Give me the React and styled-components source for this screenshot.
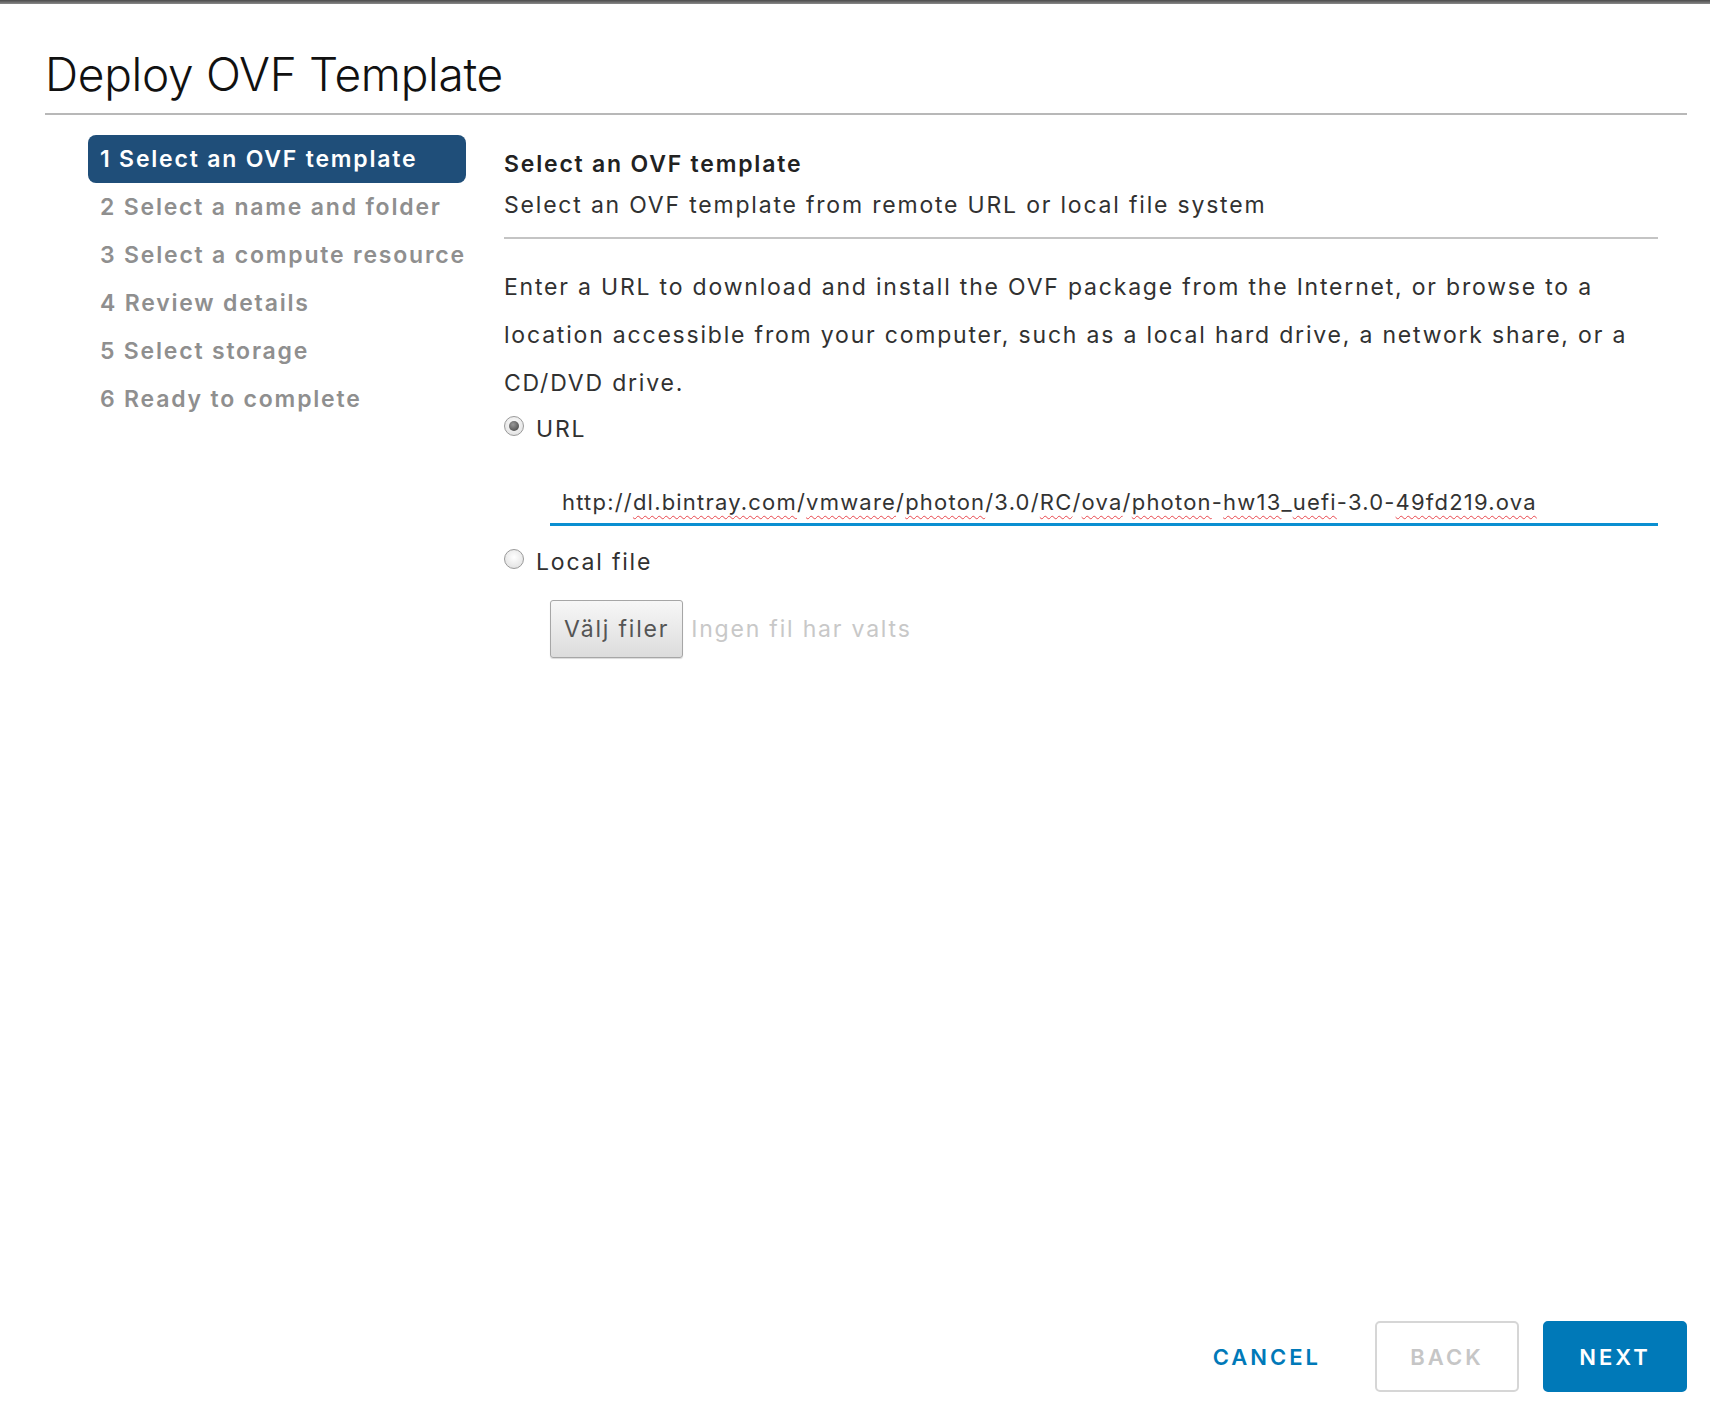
import styled, { createGlobalStyle } from "styled-components"

const GlobalStyle = createGlobalStyle`
  html, body {
    margin: 0;
    padding: 0;
    background: #fff;
  }
  body {
    font-family: Inter, "Open Sans", "Liberation Sans", sans-serif;
    color: #313131;
  }
`

const PageStyled = styled.div`
  min-height: 1422px;
  display: flex;
  flex-direction: column;
  box-sizing: border-box;
`

const TopStripStyled = styled.div`
  height: 4px;
  background: linear-gradient(#4a4a4a, #8a8a8a);
`

const DialogStyled = styled.div`
  flex: 1;
  display: flex;
  flex-direction: column;
  padding: 0 23px 30px 45px;
`

const TitleStyled = styled.h1`
  margin: 0;
  padding: 42px 0 11px;
  font-size: 46px;
  font-weight: 300;
  color: #111;
  letter-spacing: -0.3px;
  border-bottom: 2px solid #b8b8b8;
`

const ColumnsStyled = styled.div`
  display: flex;
  gap: 38px;
  padding-top: 20px;
`

const StepsStyled = styled.ol`
  list-style: none;
  margin: 0 0 0 43px;
  padding: 0;
  width: 378px;
  flex-shrink: 0;
`

const StepStyled = styled.li`
  height: 48px;
  display: flex;
  align-items: center;
  padding-left: 12px;
  box-sizing: border-box;
  font-size: 23px;
  font-weight: 600;
  letter-spacing: 1.8px;
  border-radius: 8px;
  color: ${p => (p.$active ? "#fff" : "#8f8f8f")};
  background: ${p => (p.$active ? "#1f4e79" : "transparent")};
  white-space: nowrap;
`

const ContentStyled = styled.div`
  flex: 1;
  padding-right: 29px;
  font-size: 23px;
  letter-spacing: 1.8px;
  color: #313131;
`

const HeadStyled = styled.div`
  border-bottom: 2px solid #c4c4c4;
  padding: 9px 0 11px;
`

const HeadTitleStyled = styled.h2`
  margin: 0;
  font-size: 23px;
  font-weight: 600;
  line-height: 41px;
  color: #222;
`

const HeadSubStyled = styled.p`
  margin: 0;
  line-height: 41px;
`

const IntroStyled = styled.p`
  margin: 24px 0 0;
  line-height: 48px;
`

const OptionStyled = styled.label`
  display: flex;
  align-items: center;
  gap: 12px;
  height: 44px;
  margin-top: ${p => p.$gap || 0}px;
`

const RadioStyled = styled.span`
  width: 20px;
  height: 20px;
  border-radius: 50%;
  box-sizing: border-box;
  border: 1px solid #9a9a9a;
  background: radial-gradient(circle at 50% 40%, #fff 0%, #e6e6e6 70%, #d0d0d0 100%);
  display: flex;
  align-items: center;
  justify-content: center;
  margin-top: -6px;
  &::after {
    content: "";
    width: 10px;
    height: 10px;
    border-radius: 50%;
    background: ${p => (p.$checked ? "radial-gradient(circle at 40% 35%, #999, #3c3c3c)" : "transparent")};
  }
`

const FieldStyled = styled.div`
  margin: 36px 0 0 46px;
  padding: 0 0 6px 12px;
  border-bottom: 3px solid #0a8fd1;
  color: #333;
  font-size: 22px;
  letter-spacing: 1.2px;
  line-height: 30px;
  white-space: nowrap;
`

const TypoStyled = styled.span`
  text-decoration: underline wavy #e8474e;
  text-decoration-thickness: 1px;
  text-underline-offset: 5px;
`

const FileRowStyled = styled.div`
  display: flex;
  align-items: center;
  gap: 8px;
  margin: 16px 0 0 46px;
`

const FileButtonStyled = styled.button`
  height: 58px;
  padding: 0 13px;
  font-family: inherit;
  font-size: 23px;
  letter-spacing: 1.8px;
  color: #555;
  border: 1px solid #a6a6a6;
  border-radius: 3px;
  background: linear-gradient(#f7f7f7, #dcdcdc);
  box-shadow: 0 1px 1px rgba(0, 0, 0, 0.15);
`

const NoFileStyled = styled.span`
  color: #c8c8c8;
`

const FooterStyled = styled.div`
  margin-top: auto;
  display: flex;
  justify-content: flex-end;
  gap: 24px;
`

const ButtonStyled = styled.button`
  height: 71px;
  min-width: 144px;
  padding: 0 28px;
  box-sizing: border-box;
  font-family: inherit;
  font-size: 22px;
  font-weight: 600;
  letter-spacing: 3px;
  border-radius: 5px;
  border: 2px solid ${p => (p.$variant === "primary" ? "#0079b8" : p.$variant === "outline" ? "#d6d6d6" : "transparent")};
  background: ${p => (p.$variant === "primary" ? "#0079b8" : "transparent")};
  color: ${p => (p.$variant === "primary" ? "#fff" : p.$variant === "outline" ? "#c6c6c6" : "#0079b8")};
`

const steps = [
  "1 Select an OVF template",
  "2 Select a name and folder",
  "3 Select a compute resource",
  "4 Review details",
  "5 Select storage",
  "6 Ready to complete"
]

const App = () => {
  return (
    <>
      <GlobalStyle />
      <PageStyled>
        <TopStripStyled />
        <DialogStyled>
          <TitleStyled>Deploy OVF Template</TitleStyled>

          <ColumnsStyled>
            <StepsStyled>
              {steps.map((step, i) => (
                <StepStyled key={step} $active={i === 0}>
                  {step}
                </StepStyled>
              ))}
            </StepsStyled>

            <ContentStyled>
              <HeadStyled>
                <HeadTitleStyled>Select an OVF template</HeadTitleStyled>
                <HeadSubStyled>Select an OVF template from remote URL or local file system</HeadSubStyled>
              </HeadStyled>

              <IntroStyled>
                Enter a URL to download and install the OVF package from the Internet, or browse to a
                location accessible from your computer, such as a local hard drive, a network share, or a
                CD/DVD drive.
              </IntroStyled>

              <OptionStyled>
                <RadioStyled $checked />
                URL
              </OptionStyled>

              <FieldStyled>
                http://<TypoStyled>dl.bintray.com</TypoStyled>/<TypoStyled>vmware</TypoStyled>/<TypoStyled>photon</TypoStyled>/3.0/<TypoStyled>RC</TypoStyled>/<TypoStyled>ova</TypoStyled>/<TypoStyled>photon</TypoStyled>-<TypoStyled>hw13</TypoStyled>_<TypoStyled>uefi</TypoStyled>-3.0-<TypoStyled>49fd219.ova</TypoStyled>
              </FieldStyled>

              <OptionStyled $gap={14}>
                <RadioStyled />
                Local file
              </OptionStyled>

              <FileRowStyled>
                <FileButtonStyled>Välj filer</FileButtonStyled>
                <NoFileStyled>Ingen fil har valts</NoFileStyled>
              </FileRowStyled>
            </ContentStyled>
          </ColumnsStyled>

          <FooterStyled>
            <ButtonStyled>CANCEL</ButtonStyled>
            <ButtonStyled $variant="outline">BACK</ButtonStyled>
            <ButtonStyled $variant="primary">NEXT</ButtonStyled>
          </FooterStyled>
        </DialogStyled>
      </PageStyled>
    </>
  )
}

export default App
